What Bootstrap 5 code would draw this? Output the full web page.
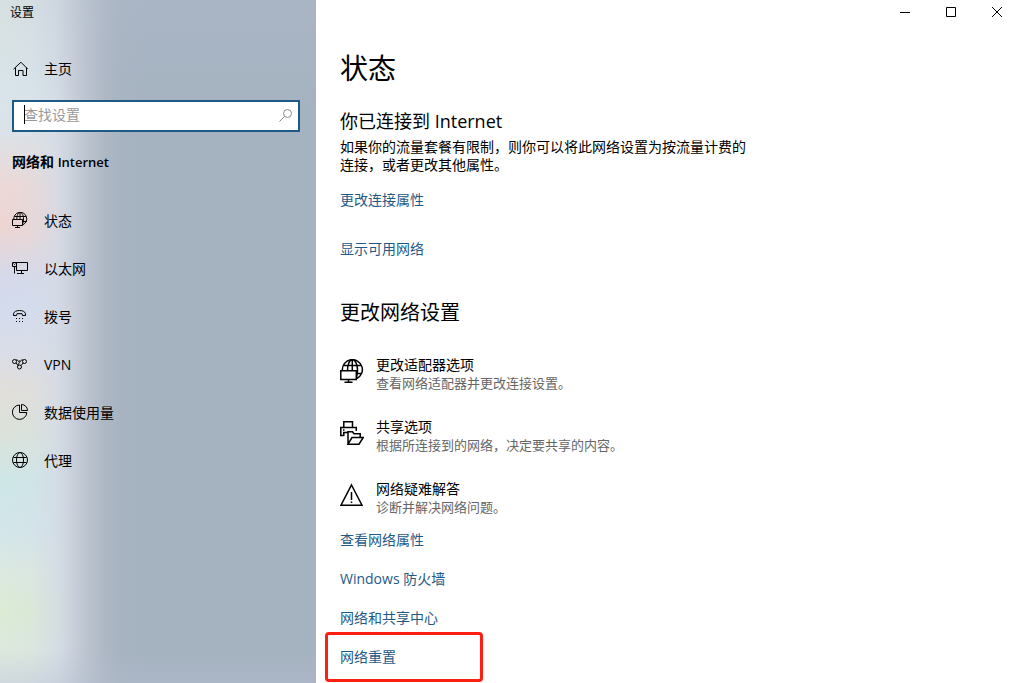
<!DOCTYPE html>
<html lang="zh-CN">
<head>
<meta charset="utf-8">
<meta name="viewport" content="width=device-width, initial-scale=1">
<title>设置</title>
<link href="https://cdn.jsdelivr.net/npm/bootstrap@5.3.0/dist/css/bootstrap.min.css" rel="stylesheet">
<style>
  body { font-family: "Open Sans", "Noto Sans CJK SC", sans-serif; font-size: 14px; line-height: 20px; color: #000; background: #fff; }
  svg { display: block; fill: none; stroke: currentColor; stroke-width: 1; }
  .side-pane {
    width: 316px;
    background:
      linear-gradient(to bottom, rgba(180,190,208,.25), rgba(180,190,208,0) 130px, rgba(180,190,208,0) 650px, rgba(180,190,208,.35)),
      linear-gradient(to right, rgba(214,222,232,0) 0, rgba(214,222,232,.2) 30px, rgba(212,219,229,.8) 56px, #cdd4de 68px, #bcc4d0 86px, #adb7c4 106px, #a7b3c1 124px, #a5b2c0 145px),
      linear-gradient(to bottom, #e2ebe6 0, #dce8ec 90px, #dbe3e9 130px, #ecd8d5 185px, #edd5d3 230px, #d6d9ea 275px, #d3dbee 310px, #dadde8 350px, #e1ded9 390px, #dbe3da 435px, #cee7e7 480px, #d3e6ea 530px, #dce9df 575px, #dbebd3 610px, #dde7e4 683px);
  }
  .side-title { font-size: 12px; line-height: 16px; padding: 5px 10px 0; }
  .side-link { height: 48px; padding-left: 12px; gap: 16px; color: #000; text-decoration: none; }
  .side-link svg { width: 16px; height: 16px; margin-bottom: 2px; }
  .home-link { height: 32px; margin-top: 32px; }
  .search-box { margin: 15px 16px 0 12px; }
  .search-box .form-control {
    height: 32px; border: 2px solid #1f5a86; border-radius: 0; background: #fff; box-shadow: none;
    font-size: 14px; line-height: 20px; padding: 0 34px 4px 10px;
  }
  .search-box .form-control::placeholder { color: #999; opacity: 1; }
  .search-caret { left: 12px; top: 5px; width: 1px; height: 19px; background: #000; }
  .search-icon { right: 8px; top: 9px; color: #8b8b8b; }
  .group-title { font-size: 14px; line-height: 20px; font-weight: 600; margin: 20px 0 25px 12px; }
  .group-title span { font-size: 13px; }
  .caption-bar { height: 24px; gap: 14px; }
  .caption-bar button { width: 32px; height: 24px; border: 0; padding: 0; background: transparent; color: #000; }
  .page-body { padding: 26px 24px 0; }
  .page-body h1 { font-size: 28px; line-height: 36px; font-weight: 400; margin: 0 0 23px; }
  .page-body h2 { line-height: 24px; font-weight: 400; margin: 0; }
  .head-status { font-size: 18px; }
  .page-body .head-change { font-size: 20px; margin: 42px 0 31px; }
  .status-note { max-width: 410px; line-height: 18px; margin: 5px 0 16px; }
  .page-body a { color: #1f5a86; text-decoration: none; }
  .connect-links { gap: 29px; }
  .option-list { gap: 26px; margin: 0 0 14px; }
  .option-list button { gap: 12px; border: 0; padding: 0; background: transparent; color: #000; line-height: 18px; text-align: left; }
  .option-list svg { stroke-width: 1.5; margin-top: 3px; }
  .option-list small { display: block; font-size: 13px; color: #666; }
  .option-list span { height: 36px; }
  .related { gap: 19px; }
  .reset-frame { width: 158px; border: 3px solid #fd1f12; border-radius: 4px; padding: 12px; margin: 4px 0 0 -15px; }
</style>
</head>
<body>
<div class="d-flex min-vh-100">
  <aside class="side-pane flex-shrink-0">
    <div class="side-title">设置</div>
    <a href="#" class="side-link home-link d-flex align-items-center">
      <svg viewBox="0 0 16 16"><path d="M1.500 9.200 8.900 2.200l7 7M3.500 7.800v7.700h3v-5h4.500v5h3.500V7.800"/></svg>主页
    </a>
    <div class="search-box position-relative">
      <input type="text" class="form-control" placeholder="查找设置" aria-label="查找设置">
      <span class="search-caret position-absolute"></span>
      <svg class="search-icon position-absolute" width="13" height="13" viewBox="0 0 13 13"><circle cx="8.500" cy="4.500" r="4"/><path d="M5.600 7.400.4 12.600"/></svg>
    </div>
    <h2 class="group-title">网络和 <span>Internet</span></h2>
    <nav>
      <a href="#" class="side-link d-flex align-items-center">
        <svg viewBox="0 0 16 16"><path d="M1.800 7.500a6.500 6.500 0 1 1 9.200 5.200M2.500 4.500h11.600M11 9.500h3.800M4.800 7.500c0-4 1.200-7 3.200-7s3.500 2.500 3.500 6.500c0 2-.2 3.500-.7 4.600M8 .5v7"/><path d="M.5 7.500h10v6H.5zM5.500 13.500v2M3 15.500h5"/></svg>状态
      </a>
      <a href="#" class="side-link d-flex align-items-center">
        <svg viewBox="0 0 16 16"><path d="M4.500 2.500h11v8h-11zM9.500 10.500v3M5 13.500h7M.5 2.500h4v4h-4zM2.500 6.500v7M1.500 3.500l1 1 1-1"/></svg>以太网
      </a>
      <a href="#" class="side-link d-flex align-items-center">
        <svg viewBox="0 0 16 16"><path d="M1.500 7.500V5.800c.5-2.300 3-3.300 6-3.300s5.500 1 6 3.300v1.700h-3l-.5-1.800H5l-.5 1.800z"/><path fill="currentColor" stroke="none" d="M4 10h1v1H4zM7 10h1v1H7zM10 10h1v1h-1zM4 13h1v1H4zM7 13h1v1H7zM10 13h1v1h-1z"/></svg>拨号
      </a>
      <a href="#" class="side-link d-flex align-items-center">
        <svg viewBox="0 0 16 16"><circle cx="2.500" cy="5.500" r="2"/><circle cx="12.500" cy="5.500" r="2"/><circle cx="7.500" cy="11" r="2"/><path d="M4 4c1.500-.4 2 .5 3.200 2M4.200 7 6 9.500M11 4C8.500 3.500 7.500 6 5.800 9.500M11 7 9.200 9.500M7.500 4.500l1 1"/></svg>VPN
      </a>
      <a href="#" class="side-link d-flex align-items-center">
        <svg viewBox="0 0 16 16"><path d="M7.500 1A7.200 7.200 0 1 0 14.800 8.500H7.500zM9.500.5v6h6a6 6 0 0 0-6-6z"/></svg>数据使用量
      </a>
      <a href="#" class="side-link d-flex align-items-center">
        <svg viewBox="0 0 16 16"><circle cx="8" cy="8" r="7.500"/><ellipse cx="8" cy="8" rx="3.500" ry="7.500"/><path d="M1.500 5.500h13M1.500 10.500h13"/></svg>代理
      </a>
    </nav>
  </aside>
  <main class="flex-grow-1">
    <div class="caption-bar d-flex justify-content-end">
      <button type="button" aria-label="最小化"><svg class="mx-auto" width="10" height="10" viewBox="0 0 10 10"><path d="M0 5.500h10"/></svg></button>
      <button type="button" aria-label="最大化"><svg class="mx-auto" width="10" height="10" viewBox="0 0 10 10"><path d="M.5.5h9v9h-9z"/></svg></button>
      <button type="button" aria-label="关闭"><svg class="mx-auto" width="10" height="10" viewBox="0 0 10 10"><path d="m0 0 10 10M10 0 0 10"/></svg></button>
    </div>
    <div class="page-body">
      <h1>状态</h1>
      <h2 class="head-status">你已连接到 Internet</h2>
      <p class="status-note">如果你的流量套餐有限制，则你可以将此网络设置为按流量计费的连接，或者更改其他属性。</p>
      <div class="connect-links d-flex flex-column align-items-start">
        <a href="#">更改连接属性</a>
        <a href="#">显示可用网络</a>
      </div>
      <h2 class="head-change">更改网络设置</h2>
      <div class="option-list d-flex flex-column align-items-start">
        <button type="button" class="d-flex align-items-start">
          <svg width="24" height="24" viewBox="0 0 24 24"><path d="M2.400 11.500a10 10 0 1 1 14 8.300M4 6.500h16.800M16.500 14.500h5.200M7.500 11.500c0-6 2-10.700 4.800-10.700s5.200 4.200 5.200 10c0 3-.3 5.500-1 7.500M12.300.8v10.700"/><path d="M.8 11.800h15.500v8.700H.8zM8.500 20.500v3M4.500 23.200h8"/></svg>
          <span>更改适配器选项<small>查看网络适配器并更改连接设置。</small></span>
        </button>
        <button type="button" class="d-flex align-items-start">
          <svg width="24" height="24" viewBox="0 0 24 24"><path d="M3.800 6.500V.8h8.700v5.700M3.800 14.500H.8v-8h15.500v3.500M3.800 15V11.500H8M3 9h1.500"/><path d="M8 23.200V10.800h4.500l1.500 2h6.200v3.700M8 23.200l4-6.700h11.200L19 23.200z"/></svg>
          <span>共享选项<small>根据所连接到的网络，决定要共享的内容。</small></span>
        </button>
        <button type="button" class="d-flex align-items-start">
          <svg width="24" height="24" viewBox="0 0 24 24"><path d="M11.500 2 22 22.200H1zM11.500 9v8M11.500 18.500v1.500"/></svg>
          <span>网络疑难解答<small>诊断并解决网络问题。</small></span>
        </button>
      </div>
      <div class="related d-flex flex-column align-items-start">
        <a href="#">查看网络属性</a>
        <a href="#">Windows 防火墙</a>
        <a href="#">网络和共享中心</a>
      </div>
      <div class="reset-frame"><a href="#" class="d-block">网络重置</a></div>
    </div>
  </main>
</div>
<script src="https://cdn.jsdelivr.net/npm/bootstrap@5.3.0/dist/js/bootstrap.bundle.min.js"></script>
</body>
</html>
